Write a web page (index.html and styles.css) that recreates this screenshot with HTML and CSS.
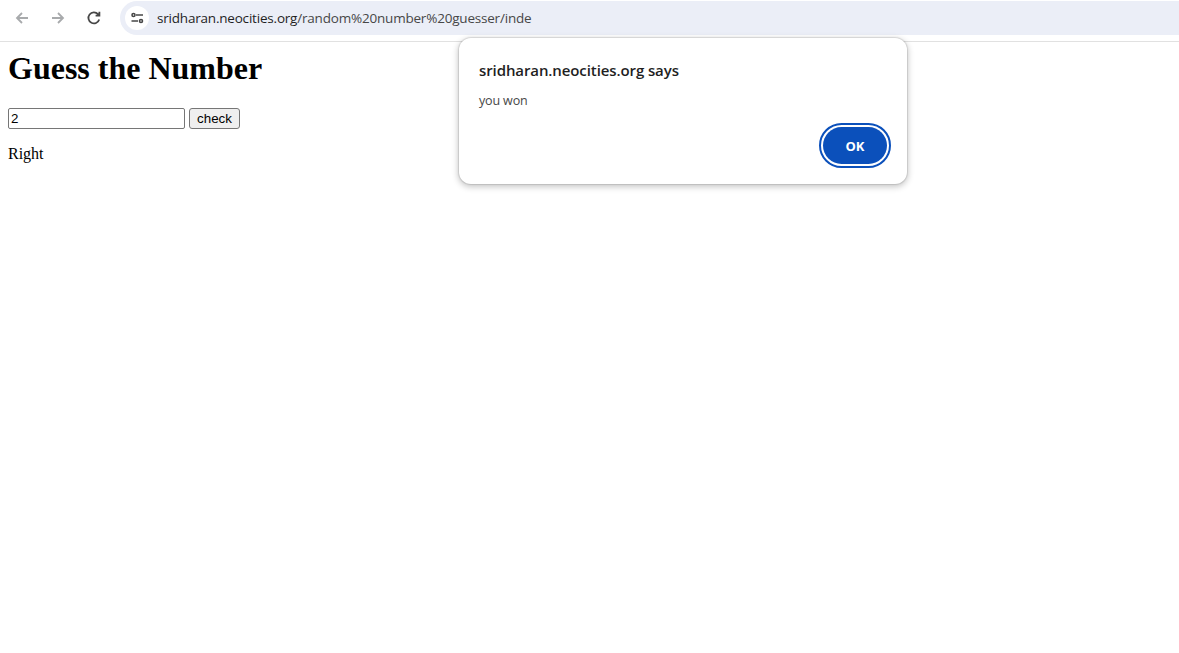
FILE: index.html
```html
<!DOCTYPE html>
<html lang="en">
<head>
<meta charset="utf-8">
<title>Guess the Number</title>
<link rel="stylesheet" href="styles.css">
</head>
<body>
<header class="toolbar">
  <nav class="nav-buttons">
    <svg class="nav-icon" viewBox="0 0 16 16" width="16" height="16"><path class="stroke-muted" d="M14 8H3M8 3L3 8L8 13"/></svg>
    <svg class="nav-icon" viewBox="0 0 16 16" width="16" height="16"><path class="stroke-muted" d="M2 8H13M8 3L13 8L8 13"/></svg>
    <svg class="nav-icon" viewBox="0 0 16 16" width="16" height="16"><path class="stroke-dark" d="M13.2 9.5A5.5 5.5 0 1 1 12 4.2L13.4 5.6M13.4 1.8V5.6H9.6"/></svg>
  </nav>
  <div class="omnibox">
    <span class="site-chip">
      <svg viewBox="0 0 16 16" width="16" height="16"><path class="stroke-tune" d="M7 5H14M2.5 11H9"/><circle class="stroke-tune" cx="4.5" cy="5" r="1.5"/><circle class="stroke-tune" cx="12" cy="11" r="1.5"/></svg>
    </span>
    <span class="url">sridharan.neocities.org<span class="url-path">/random%20number%20guesser/inde</span></span>
  </div>
</header>
<main class="page">
  <h1>Guess the Number</h1>
  <div class="form-row">
    <input class="guess" type="text" value="2">
    <button class="check" type="button">check</button>
  </div>
  <p class="result">Right</p>
</main>
<section class="dialog">
  <h2>sridharan.neocities.org says</h2>
  <p>you won</p>
  <div class="dialog-actions">
    <button class="ok" type="button">OK</button>
  </div>
</section>
</body>
</html>
```
FILE: styles.css
```css
html, body {
  margin: 0;
  height: 100%;
  background: #fff;
  overflow: hidden;
}
body {
  font-family: "Liberation Serif", serif;
  font-size: 16px;
  color: #000;
}
.toolbar {
  display: flex;
  align-items: center;
  height: 41px;
  box-sizing: content-box;
  border-bottom: 1px solid #e1e1e1;
  padding-left: 14px;
}
.nav-buttons {
  display: flex;
  gap: 20px;
  align-items: center;
  margin-top: -5px;
}
.nav-icon {
  display: block;
  fill: none;
}
.stroke-muted, .stroke-dark, .stroke-tune {
  fill: none;
  stroke-width: 1.8;
}
.stroke-muted { stroke: #a8aaac; }
.stroke-dark { stroke: #474747; }
.stroke-tune { stroke: #474747; stroke-width: 1.6; }
.omnibox {
  display: flex;
  align-items: center;
  flex: 1;
  height: 34px;
  margin: -5px 0 0 18px;
  padding-left: 5px;
  background: #ebeef7;
  border-radius: 17px 0 0 17px;
}
.site-chip {
  display: flex;
  align-items: center;
  justify-content: center;
  width: 24px;
  height: 24px;
  border-radius: 50%;
  background: #fff;
}
.url {
  margin-left: 8px;
  font: 13.5px "Open Sans", sans-serif;
  letter-spacing: -0.2px;
  color: #1f1f1f;
  white-space: nowrap;
}
.url-path { color: #474747; }
.page {
  padding: 8px;
}
h1 {
  margin: 0 0 21px;
  font-size: 32px;
  line-height: 37px;
}
.form-row {
  display: flex;
  align-items: stretch;
  gap: 4px;
  height: 21px;
}
.guess {
  box-sizing: border-box;
  width: 177px;
  margin: 0;
  padding: 1px 2px;
  font: 13.33px "Liberation Sans", sans-serif;
  border: 1px solid #767676;
  border-radius: 2px;
  color: #000;
}
.check {
  box-sizing: border-box;
  width: 51px;
  margin: 0;
  padding: 1px 6px;
  font: 13.33px "Liberation Sans", sans-serif;
  color: #000;
  background: #efefef;
  border: 1px solid #767676;
  border-radius: 3px;
}
.result {
  margin: 16px 0;
  line-height: 18px;
}
.dialog {
  position: absolute;
  left: 459px;
  top: 38px;
  box-sizing: border-box;
  width: 448px;
  height: 146px;
  padding: 23px 18px 0 20px;
  background: #fff;
  border-radius: 12px;
  box-shadow: 0 0 1px 1px rgba(0,0,0,.1), 0 2px 6px 1px rgba(0,0,0,.22);
  font-family: "Open Sans", sans-serif;
}
.dialog h2 {
  margin: 0;
  font-size: 15px;
  line-height: 18px;
  font-weight: 600;
  letter-spacing: -0.1px;
  color: #1f1f1f;
}
.dialog p {
  margin: 14px 0 0;
  font-size: 12.5px;
  line-height: 16px;
  letter-spacing: -0.15px;
  color: #474747;
}
.dialog-actions {
  display: flex;
  justify-content: flex-end;
  margin-top: 16px;
}
.ok {
  box-sizing: border-box;
  width: 64px;
  height: 37px;
  margin: 2px;
  padding: 0;
  font: 700 13px "Open Sans", sans-serif;
  color: #fff;
  background: #0b50bb;
  border: none;
  border-radius: 19px;
  outline: 2px solid #0b50bb;
  outline-offset: 2px;
}
```
